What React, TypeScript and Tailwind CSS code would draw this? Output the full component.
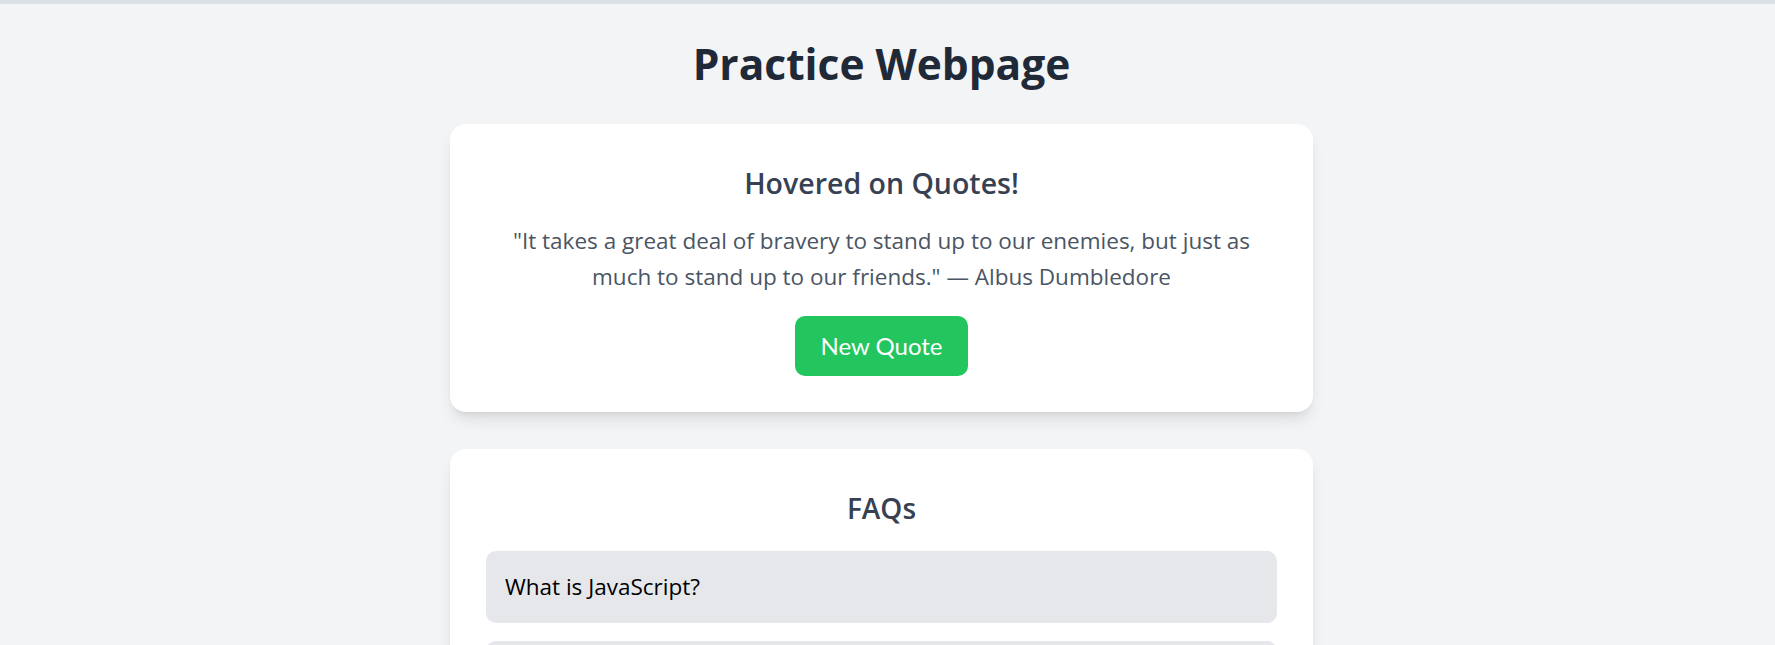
import React from "react";

const faqs = ["What is JavaScript?", "What is React?", "What is Tailwind CSS?"];

const App: React.FC = () => {
  return (
    <div className="h-screen overflow-hidden bg-[#f3f4f6] font-['Segoe_UI','Open_Sans',sans-serif]">
      <div className="h-[4px] bg-[#d9e0e8]" />
      <div className="flex flex-col items-center pr-[12px] pt-[35px]">
        <h1 className="text-[42.5px] leading-[50px] font-bold text-[#1f2937]">Practice Webpage</h1>

        <section className="mt-[35px] w-[863px] rounded-[16px] bg-white px-[36px] pt-[39px] pb-[36px] text-center shadow-lg">
          <h2 className="text-[28.5px] leading-[40px] font-semibold text-[#374151]">Hovered on Quotes!</h2>
          <p className="mt-[20px] text-[22.5px] leading-[36px] text-[#4b5563]">
            "It takes a great deal of bravery to stand up to our enemies, but just as much to stand up to our friends." — Albus Dumbledore
          </p>
          <button className="mt-[21px] h-[60px] rounded-[10px] bg-[#22c55e] px-[25px] font-['Lato',sans-serif] text-[24px] text-white">
            New Quote
          </button>
        </section>

        <section className="mt-[37px] w-[863px] rounded-[16px] bg-white px-[36px] pt-[39px] pb-[36px] text-center shadow-lg">
          <h2 className="text-[28px] leading-[40px] font-semibold text-[#374151]">FAQs</h2>
          <div className="mt-[23px] flex flex-col gap-[18px] text-left">
            {faqs.map((q) => (
              <div key={q} className="flex h-[72px] items-center rounded-[10px] bg-[#e5e7eb] px-[19px] text-[22.5px] text-black">
                {q}
              </div>
            ))}
          </div>
        </section>
      </div>
    </div>
  );
};

export default App;
